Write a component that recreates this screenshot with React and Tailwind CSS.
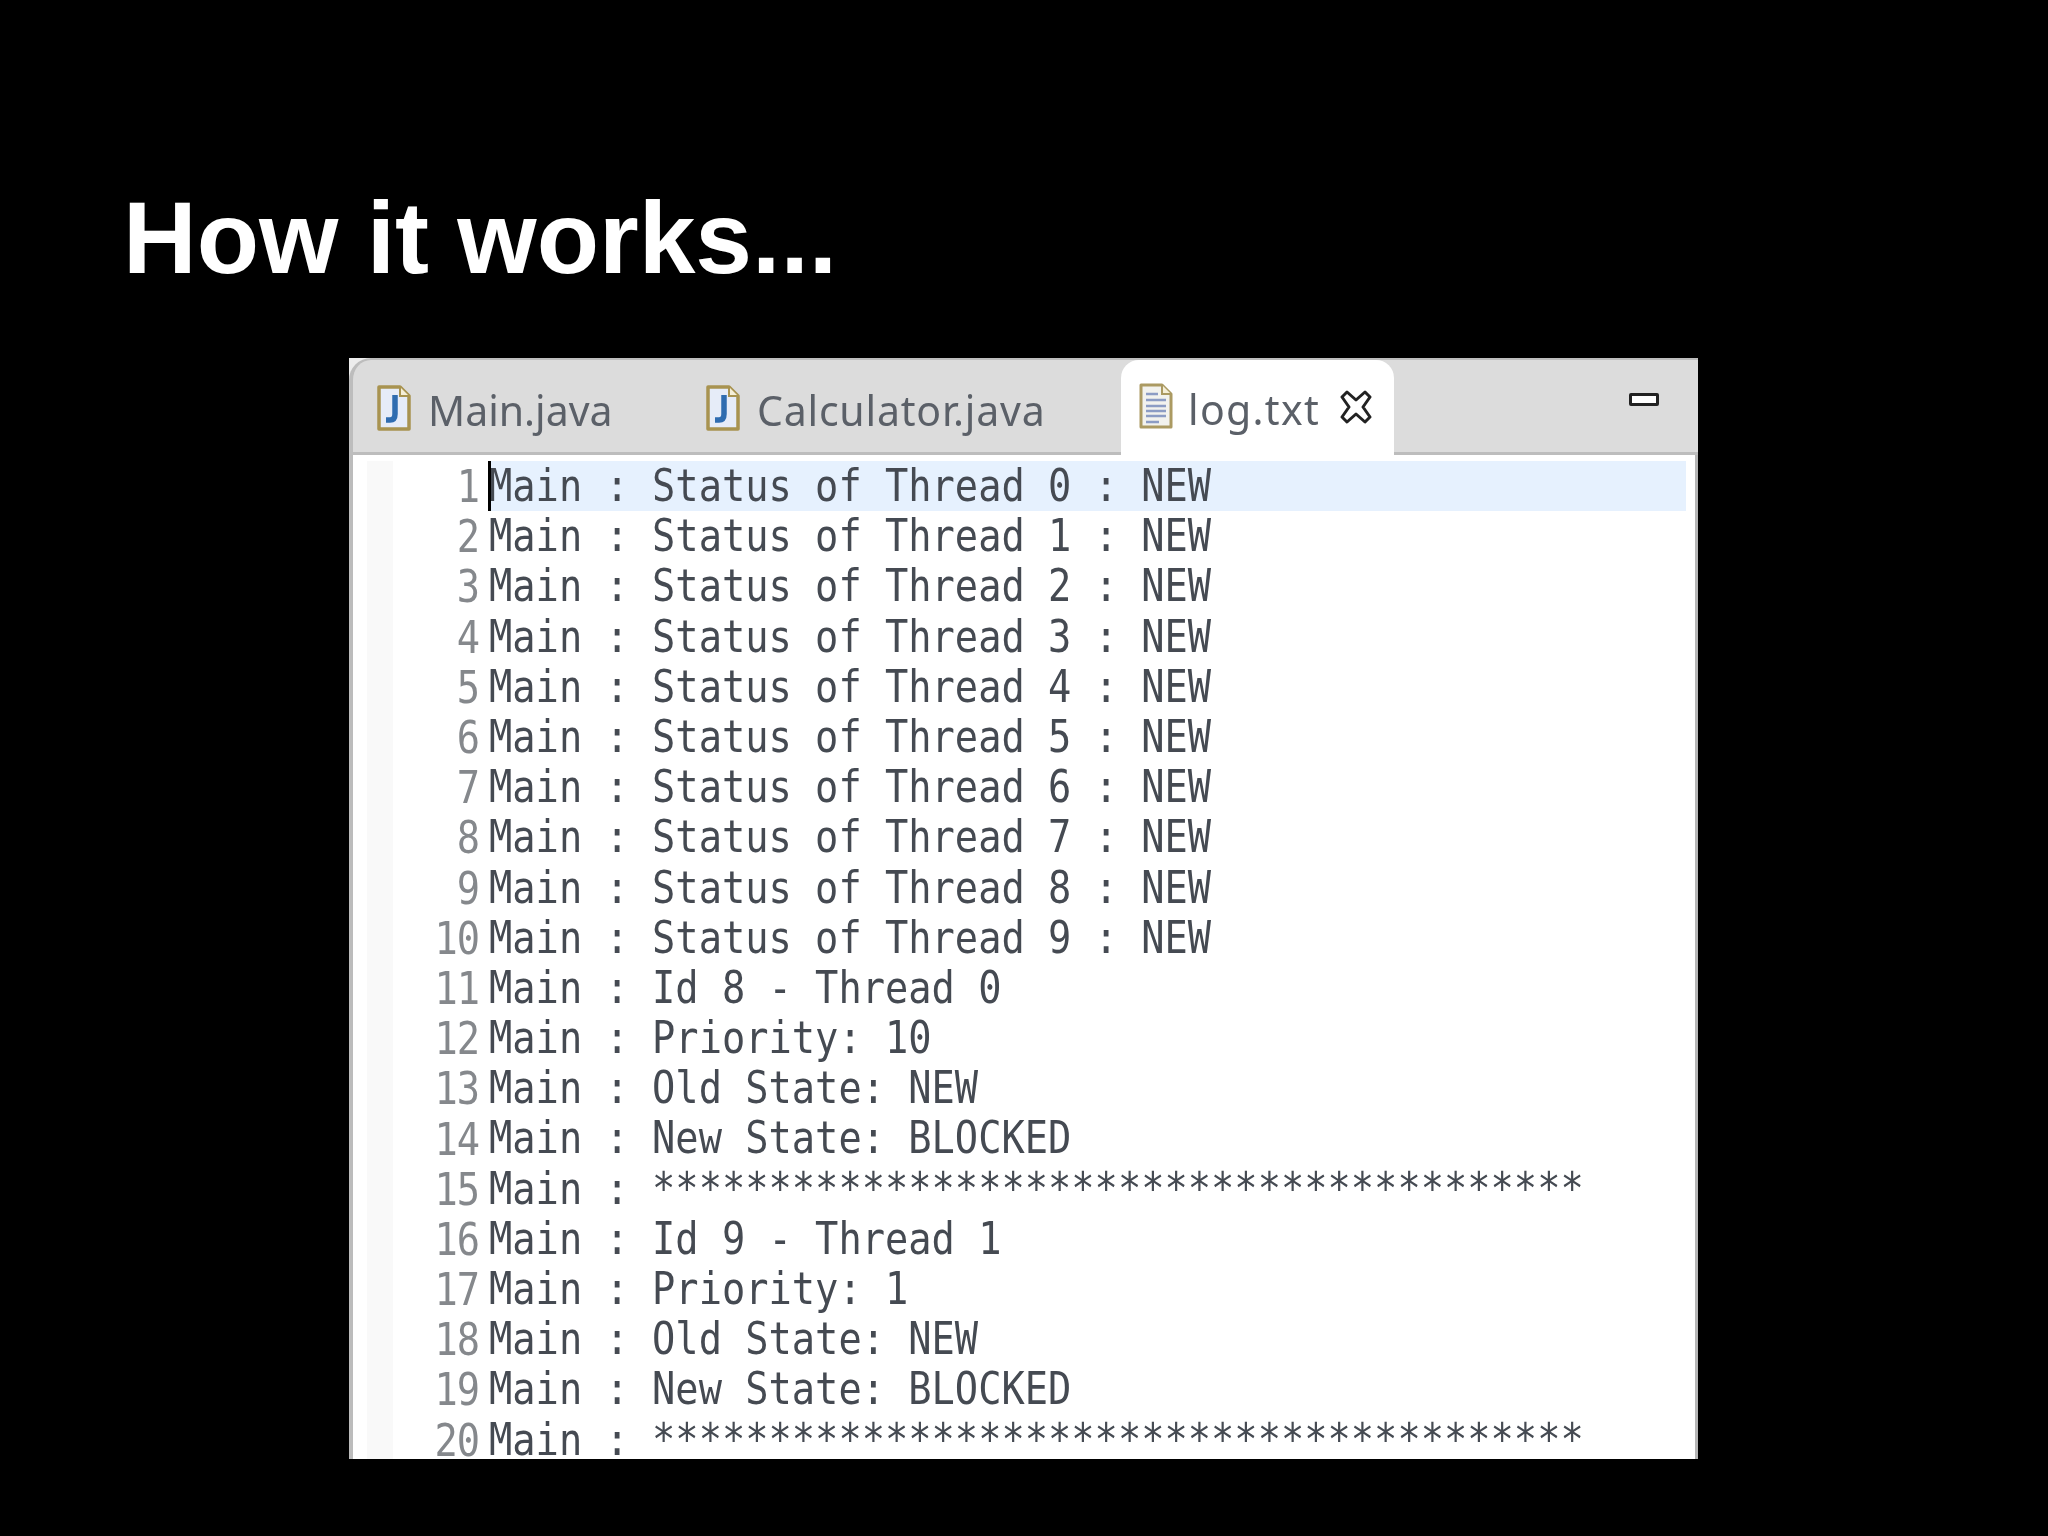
const rows = [
  'Main : Status of Thread 0 : NEW',
  'Main : Status of Thread 1 : NEW',
  'Main : Status of Thread 2 : NEW',
  'Main : Status of Thread 3 : NEW',
  'Main : Status of Thread 4 : NEW',
  'Main : Status of Thread 5 : NEW',
  'Main : Status of Thread 6 : NEW',
  'Main : Status of Thread 7 : NEW',
  'Main : Status of Thread 8 : NEW',
  'Main : Status of Thread 9 : NEW',
  'Main : Id 8 - Thread 0',
  'Main : Priority: 10',
  'Main : Old State: NEW',
  'Main : New State: BLOCKED',
  'Main : ****************************************',
  'Main : Id 9 - Thread 1',
  'Main : Priority: 1',
  'Main : Old State: NEW',
  'Main : New State: BLOCKED',
  'Main : ****************************************',
]

function JavaIcon() {
  return (
    <svg width="34" height="46" viewBox="0 0 34 46" className="shrink-0">
      <path d="M2 2H23L32 11V44H2Z" fill="#e6ecf8" stroke="#a89350" strokeWidth="3.5" strokeLinejoin="round" />
      <path d="M23 2V11H32" fill="#f5efd8" stroke="#a89350" strokeWidth="2" />
      <path d="M18 10V29Q18 35 13 35H9" fill="none" stroke="#2f6cb0" strokeWidth="5.5" />
    </svg>
  )
}

function TextIcon() {
  return (
    <svg width="34" height="46" viewBox="0 0 34 46" className="shrink-0">
      <path d="M2 2H23L32 11V44H2Z" fill="#f2f2ee" stroke="#ab9a62" strokeWidth="3" strokeLinejoin="round" />
      <path d="M23 2V11H32" fill="#f5efd8" stroke="#ab9a62" strokeWidth="2" />
      <path d="M7 11H19M7 17H27M7 23H27M7 28H27M7 33H27M7 39H20" fill="none" stroke="#8c9cc4" strokeWidth="2.5" />
    </svg>
  )
}

function CloseIcon() {
  return (
    <svg width="32" height="34" viewBox="0 0 32 34" className="shrink-0">
      <path
        d="M2 7L7 2L16 10L25 2L30 7L23 17L30 27L25 32L16 24L7 32L2 27L9 17Z"
        fill="#fff"
        stroke="#222"
        strokeWidth="3"
        strokeLinejoin="round"
      />
    </svg>
  )
}

function App() {
  return (
    <div className="h-[1536px] w-[2048px] overflow-hidden bg-black font-['Liberation_Sans',sans-serif]">
      <h1 className="pl-[123px] pt-[182px] text-[102px] leading-[112px] font-bold text-white">How it works...</h1>
      <div className="ml-[349px] mt-[64px] flex h-[1101px] w-[1349px] flex-col overflow-hidden bg-[#ececec] blur-[0.7px]">
        <div className="flex h-[97px] shrink-0 items-stretch rounded-tl-[22px] border-t-[2px] border-b-[3px] border-l-[4px] border-[#bdbdbd] bg-[#dcdcdc] font-['Noto_Sans',sans-serif] text-[41px] text-[#5b6068]">
          <div className="ml-[24px] flex w-[329px] items-center pt-[3px]">
            <JavaIcon />
            <span className="ml-[17px] mt-[7px]">Main.java</span>
          </div>
          <div className="flex w-[415px] items-center pt-[3px]">
            <JavaIcon />
            <span className="ml-[17px] mt-[7px] tracking-[0.8px]">Calculator.java</span>
          </div>
          <div className="-mb-[3px] flex w-[273px] items-center rounded-t-[18px] bg-white pb-[4px] pl-[18px]">
            <TextIcon />
            <span className="ml-[15px] mt-[8px] w-[133px] tracking-[1.3px]">log.txt</span>
            <span className="ml-[19px] mt-[2px]"><CloseIcon /></span>
          </div>
          <div className="ml-[235px] mt-[33px] h-[13px] w-[30px] rounded-[2px] border-[3px] border-[#222] bg-white" />
        </div>
        <div className="flex min-h-0 flex-1 border-r-[3px] border-l-[4px] border-r-[#b5b5b5] border-l-[#bcbcbc] bg-white pt-[6px]">
          <div className="w-[14px] shrink-0 bg-white" />
          <div className="w-[26px] shrink-0 bg-[#f9f9f9]" />
          <div className="relative min-w-0 flex-1 font-['DejaVu_Sans_Mono',monospace] text-[38.7px]">
            {rows.map((text, i) => (
              <div key={i} className="flex h-[50.2px] items-center leading-[50px]">
                <span className="w-[86px] shrink-0 origin-center translate-y-[1px] scale-y-[1.14] text-right tracking-[-1px] text-[#85888c]">{i + 1}</span>
                <span className={`ml-[10px] h-full flex-1 whitespace-pre text-[#454a52] ${i === 0 ? 'mr-[9px] bg-[#e6f1fe]' : ''}`}>
                  <span className="inline-block origin-center scale-y-[1.14]">{text}</span>
                </span>
              </div>
            ))}
            <div className="absolute left-[95px] top-0 h-[50px] w-[3px] bg-black" />
          </div>
        </div>
      </div>
    </div>
  )
}

export default App
